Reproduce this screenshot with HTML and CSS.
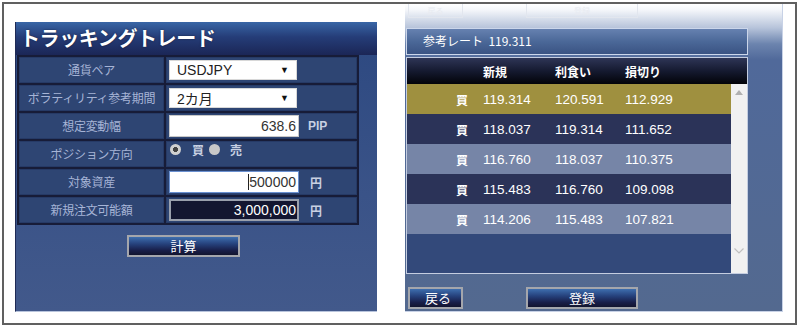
FILE: index.html
```html
<!DOCTYPE html>
<html lang="ja">
<head>
<meta charset="utf-8">
<title>トラッキングトレード</title>
<link rel="stylesheet" href="styles.css">
</head>
<body>
<div class="frame">
  <section class="left">
    <h1 class="title">トラッキングトレード</h1>
    <div class="form">
      <div class="lab">通貨ペア</div>
      <div class="val"><div class="sel"><span>USDJPY</span><span class="arr">▼</span></div></div>
      <div class="lab">ボラティリティ参考期間</div>
      <div class="val"><div class="sel"><span>2カ月</span><span class="arr">▼</span></div></div>
      <div class="lab">想定変動幅</div>
      <div class="val"><div class="inp">638.6</div><span class="unit">PIP</span></div>
      <div class="lab">ポジション方向</div>
      <div class="val radios"><span class="radio on"></span><span class="rl">買</span><span class="radio"></span><span class="rl sell">売</span></div>
      <div class="lab">対象資産</div>
      <div class="val"><div class="inp focus"><span class="caret"></span>500000</div><span class="unit yen">円</span></div>
      <div class="lab">新規注文可能額</div>
      <div class="val"><div class="inp dark">3,000,000</div><span class="unit yen">円</span></div>
    </div>
    <div class="btn calc">計算</div>
  </section>
  <section class="right">
    <div class="fadebtns"><div class="fbtn back">戻る</div><div class="fbtn reg">登録</div></div>
    <div class="rate">参考レート&nbsp; 119.311</div>
    <div class="table">
      <div class="thead"><span class="c1"></span><span class="c2">新規</span><span class="c3">利食い</span><span class="c4">損切り</span></div>
      <div class="tbody">
        <div class="rows">
          <div class="tr gold"><span class="c1">買</span><span class="c2">119.314</span><span class="c3">120.591</span><span class="c4">112.929</span></div>
          <div class="tr navy"><span class="c1">買</span><span class="c2">118.037</span><span class="c3">119.314</span><span class="c4">111.652</span></div>
          <div class="tr gray"><span class="c1">買</span><span class="c2">116.760</span><span class="c3">118.037</span><span class="c4">110.375</span></div>
          <div class="tr navy"><span class="c1">買</span><span class="c2">115.483</span><span class="c3">116.760</span><span class="c4">109.098</span></div>
          <div class="tr gray"><span class="c1">買</span><span class="c2">114.206</span><span class="c3">115.483</span><span class="c4">107.821</span></div>
        </div>
        <div class="scroll">
          <svg class="up" width="8" height="5" viewBox="0 0 8 5"><path d="M0 5 L4 0 L8 5 Z" fill="#b0b0b0"/></svg>
          <svg class="down" width="10" height="6" viewBox="0 0 10 6"><path d="M0.5 0.5 L5 5 L9.5 0.5" fill="none" stroke="#c0c0c0" stroke-width="1.2"/></svg>
        </div>
      </div>
    </div>
    <div class="bbtns"><div class="btn back">戻る</div><div class="btn reg">登録</div></div>
  </section>
</div>
</body>
</html>
```

FILE: styles.css
```css
html, body {
  margin: 0;
  padding: 0;
  background: #fff;
}
body {
  width: 800px;
  height: 329px;
  overflow: hidden;
  font-family: "Noto Sans CJK JP", "Liberation Sans", sans-serif;
}
.frame {
  margin: 2px 0 0 2px;
  width: 795px;
  height: 323px;
  box-sizing: border-box;
  border: 2px solid #606060;
  background: #fff;
  display: flex;
  align-items: flex-start;
  padding: 18px 0 0 11px;
}
.left {
  width: 362px;
  height: 290px;
  box-sizing: border-box;
  background: linear-gradient(to bottom, #2c4880 0%, #3a5388 60%, #42598b 100%);
  border-left: 1px solid #1f2a55;
  border-bottom: 1px solid #b8c4dc;
  display: flex;
  flex-direction: column;
}
.title {
  margin: 0;
  height: 33px;
  box-sizing: border-box;
  padding: 1px 0 0 4px;
  font-size: 20px;
  font-weight: bold;
  line-height: 30px;
  color: #fff;
  letter-spacing: -0.4px;
  background: linear-gradient(to bottom, #3966a6 0%, #253d78 45%, #1b2656 100%);
  text-shadow: 0 0 2px rgba(0,0,0,0.5);
}
.form {
  width: 342px;
  box-sizing: border-box;
  margin-left: 1px;
  background: #171c38;
  padding: 2px;
  display: grid;
  grid-template-columns: 145px 191px;
  grid-auto-rows: 26px;
  column-gap: 2px;
  row-gap: 2px;
}
.lab, .val {
  background: #2e4573;
  box-shadow: inset 0 0 0 1px #263a66;
}
.lab {
  color: #a6b4d6;
  font-size: 12px;
  line-height: 26px;
  text-align: center;
  letter-spacing: -0.3px;
}
.val {
  display: flex;
  align-items: center;
  padding-left: 3px;
}
.sel {
  width: 128px;
  height: 20px;
  box-sizing: border-box;
  background: #fff;
  border: 1px solid #d8d8d8;
  display: flex;
  align-items: center;
  justify-content: space-between;
  padding: 0 7px 0 7px;
  font-family: "Liberation Sans", "Noto Sans CJK JP", sans-serif;
  font-size: 14px;
  color: #222;
}
.sel .arr {
  font-size: 9px;
  color: #111;
}
.inp {
  width: 130px;
  height: 22px;
  box-sizing: border-box;
  background: #fff;
  border: 1px solid #c8c8c8;
  font-family: "Liberation Sans", sans-serif;
  font-size: 14px;
  line-height: 20px;
  color: #333;
  text-align: right;
  padding-right: 2px;
  position: relative;
}
.inp.focus {
  border: 1px solid #6a90d0;
}
.caret {
  display: inline-block;
  width: 1px;
  height: 16px;
  background: #222;
  vertical-align: -3px;
}
.inp.dark {
  background: #131630;
  border: 2px solid #9aa0ac;
  color: #fff;
  line-height: 18px;
  padding-right: 1px;
}
.unit {
  margin-left: 9px;
  font-family: "Liberation Sans", sans-serif;
  font-weight: bold;
  font-size: 12px;
  color: #c8d0e2;
}
.unit.yen {
  margin-left: 11px;
  font-family: "Noto Sans CJK JP", sans-serif;
}
.radios {
  align-items: flex-start;
  padding-top: 2px;
  padding-left: 4px;
}
.radio {
  width: 11px;
  height: 11px;
  box-sizing: border-box;
  border-radius: 50%;
  background: #c8c8c8;
  margin-top: 1px;
}
.radio.on {
  background: radial-gradient(circle, #444 0 2.3px, #d0d0d0 2.8px);
}
.rl {
  color: #c8d0e2;
  font-size: 12px;
  font-weight: bold;
  line-height: 13px;
  margin: 0 5px 0 11px;
}
.rl.sell {
  margin-left: 10px;
}
.btn {
  height: 22px;
  box-sizing: border-box;
  border: 2px solid #a4a6ac;
  background: linear-gradient(to bottom, #3e6eae 0%, #25407a 40%, #181e48 75%, #12142e 100%);
  color: #fff;
  font-size: 13px;
  line-height: 17px;
  text-align: center;
}
.btn.calc {
  width: 113px;
  margin: 10px 0 0 111px;
}
.right {
  margin-left: 28px;
  width: 378px;
  height: 308px;
  margin-top: -18px;
  box-sizing: border-box;
  background: linear-gradient(to bottom, #ffffff 0px, #f4f6fa 6px, #b6c3da 24px, #6c84ae 40px, #50699a 56px, #53698f 100%);
  border-right: 1px solid #c8d2e6;
  border-bottom: 1px solid #c8d2e6;
  overflow: hidden;
  display: flex;
  flex-direction: column;
  padding-left: 1px;
}
.fadebtns {
  display: flex;
  height: 14px;
  align-items: flex-end;
}
.fbtn {
  height: 14px;
  box-sizing: border-box;
  border: 1px solid #e2e6ee;
  border-top: none;
  color: #e8ebf1;
  font-size: 8px;
  line-height: 13px;
  text-align: center;
}
.fbtn.back {
  width: 55px;
  margin-left: 2px;
}
.fbtn.reg {
  width: 112px;
  margin-left: 63px;
}
.rate {
  margin-top: 10px;
  width: 342px;
  height: 27px;
  box-sizing: border-box;
  border: 1px solid #cbd6ea;
  background: linear-gradient(to bottom, #6681b0 0%, #4b6898 50%, #3a5383 100%);
  color: #fff;
  font-size: 12px;
  line-height: 24px;
  padding-left: 16px;
}
.table {
  margin-top: 2px;
  width: 342px;
  height: 217px;
  box-sizing: border-box;
  border: 1px solid #c4cde0;
  border-top: none;
  background: #33497a;
  display: flex;
  flex-direction: column;
}
.thead {
  height: 27px;
  display: flex;
  align-items: center;
  background: linear-gradient(to bottom, #2e3556 0%, #151a30 50%, #020308 100%);
  color: #fff;
  font-size: 12px;
  font-weight: bold;
  border-top: 1px solid #c4cde0;
  box-sizing: border-box;
}
.c1 { width: 61px; text-align: right; flex: none; }
.c2 { width: 72px; margin-left: 15px; flex: none; }
.c3 { width: 70px; flex: none; }
.c4 { flex: 1; }
.tbody {
  flex: 1;
  display: flex;
}
.rows {
  flex: 1;
}
.tr {
  height: 30px;
  display: flex;
  align-items: center;
  color: #fff;
  font-family: "Liberation Sans", sans-serif;
  font-size: 13.5px;
}
.tr .c1 {
  font-family: "Noto Sans CJK JP", sans-serif;
  font-weight: bold;
  font-size: 12px;
}
.tr.gold { background: #9f903f; }
.tr.navy { background: #2b3358; }
.tr.gray { background: #7685a7; }
.scroll {
  width: 16px;
  background: #f1f1f1;
  position: relative;
}
.scroll .up {
  position: absolute;
  left: 4px;
  top: 6px;
}
.scroll .down {
  position: absolute;
  left: 3px;
  bottom: 19px;
}
.bbtns {
  display: flex;
  margin-top: 13px;
}
.btn.back {
  width: 55px;
  margin-left: 2px;
  text-align: left;
  padding-left: 15px;
}
.btn.reg {
  width: 112px;
  margin-left: 63px;
}
```
